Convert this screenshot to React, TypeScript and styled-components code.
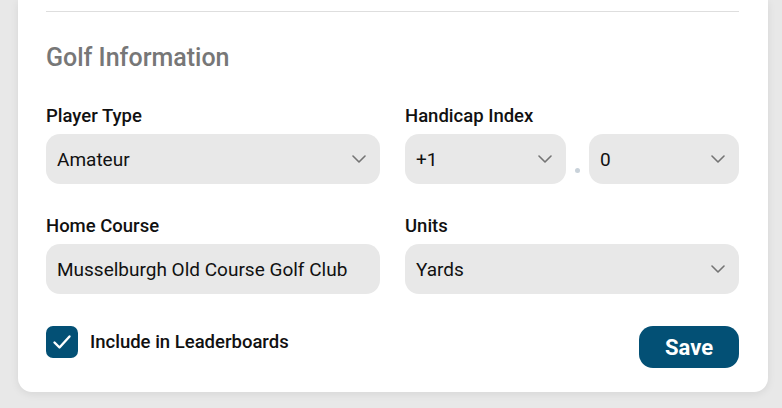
import React, { useState } from 'react';
import styled, { createGlobalStyle } from 'styled-components';

const GlobalStyle = createGlobalStyle`
    html, body {
        margin: 0;
        padding: 0;
        background: #e8e8e8;
        font-family: Roboto, "Noto Sans", Arial, sans-serif;
    }
`;

const Page = styled.div`
    padding: 0 14px 16px 18px;
`;

const Card = styled.section`
    background: #ffffff;
    border-radius: 0 0 14px 14px;
    box-shadow: 0 2px 8px rgba(0, 0, 0, 0.08);
    padding: 11px 29px 24px 28px;
`;

const Divider = styled.hr`
    border: none;
    border-top: 1px solid #dedede;
    margin: 0;
`;

const Heading = styled.h2`
    margin: 31px 0 33px;
    font-size: 25px;
    line-height: 30px;
    font-weight: 500;
    color: #777777;
`;

const Grid = styled.div`
    display: grid;
    grid-template-columns: 1fr 1fr;
    column-gap: 25px;
    row-gap: 32px;
`;

const Field = styled.div`
    display: flex;
    flex-direction: column;
    gap: 8px;
`;

const Label = styled.label`
    font-size: 18.5px;
    line-height: 20px;
    font-weight: 500;
    color: #111111;
`;

const Box = styled.div<{ $width?: number }>`
    display: flex;
    align-items: center;
    justify-content: space-between;
    height: 50px;
    box-sizing: border-box;
    padding: 0 14px 0 11px;
    background: #e8e8e8;
    border-radius: 14px;
    font-size: 19px;
    color: #111111;
    cursor: pointer;
    ${p => p.$width ? `width: ${p.$width}px; flex: none;` : 'flex: 1 1 auto; min-width: 0;'}
`;

const Pair = styled.div`
    display: flex;
    align-items: stretch;
`;

const Dot = styled.div`
    width: 23px;
    display: flex;
    justify-content: center;
    align-items: flex-end;
    padding-bottom: 11px;
    box-sizing: border-box;
    &::after {
        content: '';
        width: 5px;
        height: 5px;
        border-radius: 50%;
        background: #c9d2da;
    }
`;

const Footer = styled.div`
    display: flex;
    justify-content: space-between;
    align-items: flex-start;
    margin-top: 32px;
`;

const CheckRow = styled.label`
    display: flex;
    align-items: center;
    gap: 12px;
    font-size: 18.5px;
    font-weight: 500;
    color: #111111;
    line-height: 32px;
    cursor: pointer;
`;

const CheckBox = styled.span<{ $checked: boolean }>`
    width: 32px;
    height: 32px;
    border-radius: 7px;
    display: flex;
    align-items: center;
    justify-content: center;
    background: ${p => p.$checked ? '#035075' : '#ffffff'};
    border: ${p => p.$checked ? 'none' : '2px solid #035075'};
    box-sizing: border-box;
`;

const SaveButton = styled.button`
    width: 100px;
    height: 42px;
    border: none;
    border-radius: 14px;
    background: #035075;
    color: #ffffff;
    font-family: Roboto, Arial, sans-serif;
    font-size: 22px;
    font-weight: 700;
    cursor: pointer;
`;

const Chevron = () => (
    <svg width="14" height="8" viewBox="0 0 14 8" fill="none">
        <path d="M1 1l6 6 6-6" stroke="#747474" strokeWidth="1.6" strokeLinecap="round" strokeLinejoin="round" />
    </svg>
);

const Select = ({ value, width }: { value: string; width?: number }) => (
    <Box $width={width}>
        <span>{value}</span>
        <Chevron />
    </Box>
);

const App = () => {
    const [include, setInclude] = useState<boolean>(true);

    return (
        <Page>
            <GlobalStyle />
            <Card>
                <Divider />
                <Heading>Golf Information</Heading>
                <Grid>
                    <Field>
                        <Label>Player Type</Label>
                        <Select value="Amateur" />
                    </Field>
                    <Field>
                        <Label>Handicap Index</Label>
                        <Pair>
                            <Select value="+1" width={161} />
                            <Dot />
                            <Select value="0" />
                        </Pair>
                    </Field>
                    <Field>
                        <Label>Home Course</Label>
                        <Box>Musselburgh Old Course Golf Club</Box>
                    </Field>
                    <Field>
                        <Label>Units</Label>
                        <Select value="Yards" />
                    </Field>
                </Grid>
                <Footer>
                    <CheckRow onClick={() => setInclude(!include)}>
                        <CheckBox $checked={include}>
                            {include && (
                                <svg width="20" height="16" viewBox="0 0 20 16" fill="none">
                                    <path d="M2.5 8.5l5 5 10-11" stroke="#ffffff" strokeWidth="2.4" strokeLinecap="round" strokeLinejoin="round" />
                                </svg>
                            )}
                        </CheckBox>
                        Include in Leaderboards
                    </CheckRow>
                    <SaveButton>Save</SaveButton>
                </Footer>
            </Card>
        </Page>
    );
};

export default App;
